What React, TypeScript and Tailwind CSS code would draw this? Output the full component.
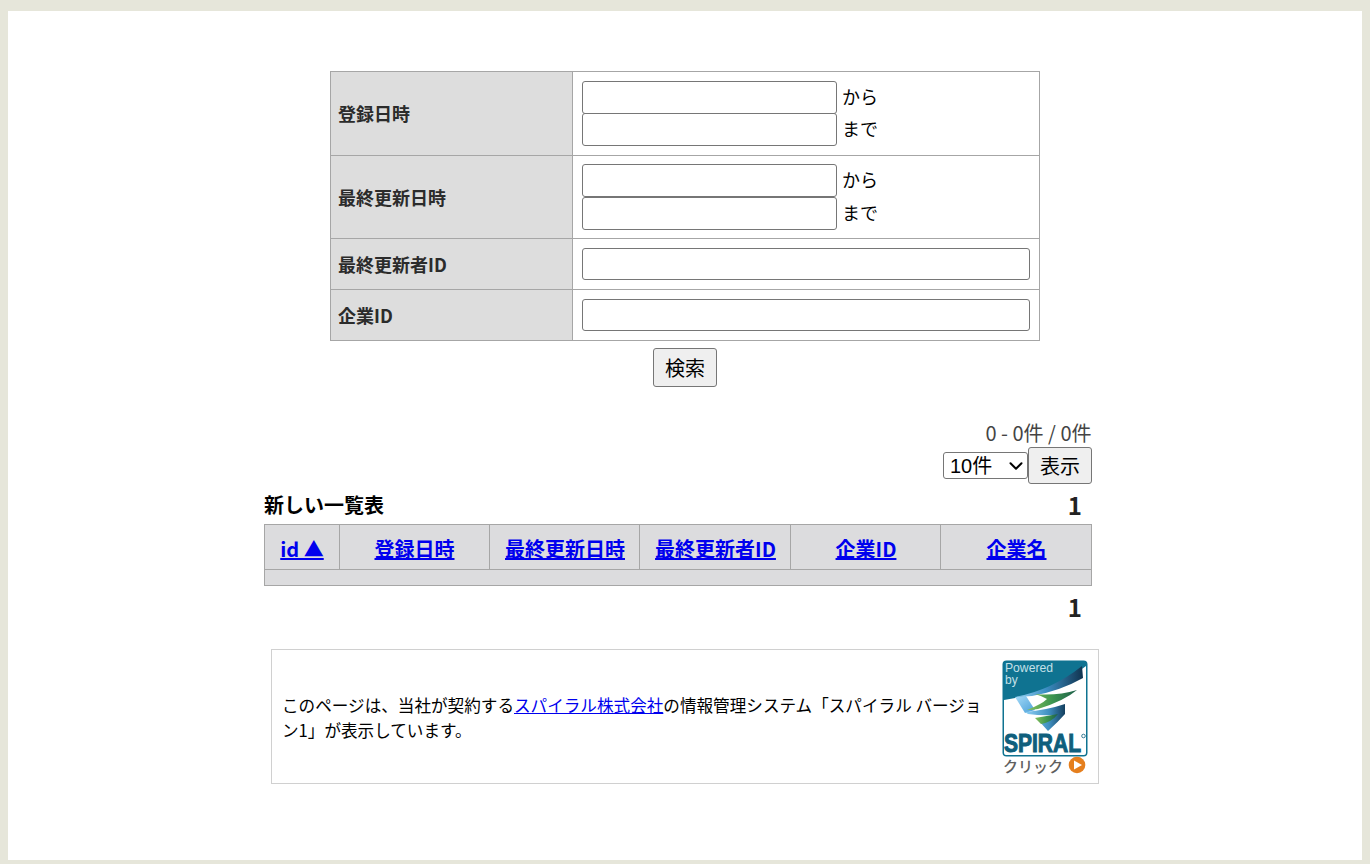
import React from 'react';
import { ChevronDown } from 'lucide-react';

const FONT = "font-['Noto_Sans_CJK_JP','Noto_Sans_CJK_SC',sans-serif]";
const ARIAL = "font-['Liberation_Sans','Noto_Sans_CJK_JP',sans-serif]";

const Logo = () => (
  <svg width="86" height="116" viewBox="0 0 86 116" className="block mt-[2px]">
    <defs>
      <linearGradient id="top" x1="0" y1="0" x2="1" y2="0">
        <stop offset="0" stopColor="#9ad6f6" />
        <stop offset="0.45" stopColor="#3c8fc4" />
        <stop offset="1" stopColor="#10334f" />
      </linearGradient>
      <linearGradient id="drop" x1="0" y1="0" x2="1" y2="1">
        <stop offset="0" stopColor="#a5dbf8" />
        <stop offset="1" stopColor="#4a9fd8" />
      </linearGradient>
      <linearGradient id="mid" x1="0" y1="0" x2="1" y2="0">
        <stop offset="0" stopColor="#8fd0f4" />
        <stop offset="0.6" stopColor="#3f8fc0" />
        <stop offset="1" stopColor="#143f5e" />
      </linearGradient>
      <linearGradient id="green" x1="0" y1="0" x2="1" y2="0">
        <stop offset="0" stopColor="#86c05a" />
        <stop offset="0.5" stopColor="#3d9650" />
        <stop offset="1" stopColor="#1d5f4a" />
      </linearGradient>
    </defs>
    <rect x="0.5" y="0.5" width="85" height="96" rx="4" fill="#0f7391" />
    <path d="M2 40 Q48 34 84 6 V93 a2 2 0 0 1 -2 2 H4 a2 2 0 0 1 -2 -2 Z" fill="#fff" />
    <text x="3" y="12" fontSize="12" fill="#c4e0e8" fontFamily="Liberation Sans" textLength="48" lengthAdjust="spacingAndGlyphs">Powered</text>
    <text x="3" y="24" fontSize="12" fill="#c4e0e8" fontFamily="Liberation Sans">by</text>
    <path d="M13 37 L24 36 L33 50 L23 53 Z" fill="url(#drop)" />
    <path d="M13 37 Q50 30 80 6 L81 18 Q58 31 30 36 Z" fill="url(#top)" />
    <path d="M33 34 Q55 36 75 30 Q62 41 36 49 Q30 50 25 50 Q40 44 45 39 Q40 36 33 34 Z" fill="url(#green)" />
    <path d="M23 52 Q45 50 63 44 L63 54 Q56 62 46 71 L37 61 L46 60 Q52 58 54 55 Q40 56 26 54 Z" fill="url(#mid)" />
    <path d="M33 58 L56 54 Q50 62 39 64 Z" fill="url(#green)" />
    <text transform="scale(1 1.2)" x="2" y="76.5" fontSize="21.5" fontWeight="bold" fill="#0f5f7d" stroke="#0f5f7d" strokeWidth="0.9" fontFamily="Liberation Sans" textLength="77" lengthAdjust="spacingAndGlyphs">SPIRAL</text>
    <circle cx="81.5" cy="76" r="1.8" fill="none" stroke="#0f5f7d" strokeWidth="0.8" />
    <text x="1" y="112" fontSize="15" fontWeight="500" fill="#5f5f5f" fontFamily="Noto Sans CJK JP" textLength="60" lengthAdjust="spacingAndGlyphs">クリック</text>
    <circle cx="75" cy="105" r="8.3" fill="#e57f1e" />
    <path d="M72 100.5 L80 105 L72 109.5 Z" fill="#fff" />
  </svg>
);

const DateRange = () => (
  <div>
    <div className="flex items-center h-[32px]">
      <input className="w-[255px] h-[33px] bg-white border border-[#767676] rounded-[3px]" />
      <span className="ml-[5px] -mt-[2px] text-[18px]">から</span>
    </div>
    <div className="flex items-center h-[33px]">
      <input className="w-[255px] h-[33px] bg-white border border-[#767676] rounded-[3px]" />
      <span className="ml-[5px] -mt-[2px] text-[18px]">まで</span>
    </div>
  </div>
);

const labelCell = 'border border-[#a6a6a6] bg-[#dddddd] pl-[7px] pr-2 text-left font-bold text-[18px] text-[#2b2b2b]';
const valueCell = 'border border-[#a6a6a6] px-[9px]';
const wideInput = 'block w-full h-[32px] bg-white border border-[#767676] rounded-[3px]';

const columns = [
  { label: 'id ▲', cls: 'w-[75px]' },
  { label: '登録日時', cls: 'w-[150px]' },
  { label: '最終更新日時', cls: 'w-[150px] pl-[1px]' },
  { label: '最終更新者ID', cls: 'w-[151px] pl-[1px]' },
  { label: '企業ID', cls: 'w-[150px] pl-[1px]' },
  { label: '企業名', cls: 'pl-[1px]' },
];

export default function App() {
  return (
    <div className={`${FONT} h-[864px] bg-[#e6e6da] pt-[11px] pr-2 pb-1 pl-2`}>
      <div className="h-full bg-white flex flex-col items-center pt-[60px] text-black">
        <table className="w-[710px] border-collapse table-fixed">
          <tbody>
            <tr className="h-[84px]">
              <th className={`${labelCell} w-[242px]`}>登録日時</th>
              <td className={valueCell}><DateRange /></td>
            </tr>
            <tr className="h-[83px]">
              <th className={labelCell}>最終更新日時</th>
              <td className={valueCell}><DateRange /></td>
            </tr>
            <tr className="h-[51px]">
              <th className={labelCell}>最終更新者ID</th>
              <td className={valueCell}><input className={wideInput} /></td>
            </tr>
            <tr className="h-[51px]">
              <th className={labelCell}>企業ID</th>
              <td className={valueCell}><input className={wideInput} /></td>
            </tr>
          </tbody>
        </table>

        <button className="mt-[7px] w-[64px] h-[39px] bg-[#efefef] border border-[#767676] rounded-[3px] text-[20px] leading-none">検索</button>

        <div className="w-[828px] mr-[14px] mt-[32px]">
          <div className="text-right text-[20px] leading-[28px] pr-[0.5px] text-[#444444]">0 - 0件 / 0件</div>
          <div className="flex justify-end items-center">
            <div className="relative w-[85px] h-[27px]">
              <select defaultValue="10" className={`${ARIAL} appearance-none w-full h-full pl-[6px] bg-white border border-[#767676] rounded-[3px] text-[20px] leading-none`}>
                <option value="10">10件</option>
              </select>
              <ChevronDown size={22} strokeWidth={2.2} className="absolute right-[1px] top-[3px] text-black pointer-events-none" />
            </div>
            <button className="w-[64px] h-[37px] bg-[#efefef] border border-[#767676] rounded-[3px] text-[20px] leading-none">表示</button>
          </div>
          <div className="flex justify-between items-center h-[40px] pr-[10px]">
            <span className="font-bold text-[20px] pt-[2px]">新しい一覧表</span>
            <span className="font-bold text-[24px] text-[#222222] pt-[2px]">1</span>
          </div>
          <table className="w-full border-collapse table-fixed bg-[#dcdcde]">
            <thead>
              <tr className="h-[45px]">
                {columns.map(col => (
                  <th key={col.label} className={`border border-[#a6a6a6] font-bold text-[20px] pt-[3px] ${col.cls}`}>
                    <a href="#" className="text-[#0000ee] underline">{col.label}</a>
                  </th>
                ))}
              </tr>
            </thead>
            <tbody>
              <tr className="h-[16px]">
                <td colSpan={6} className="border border-[#a6a6a6]"></td>
              </tr>
            </tbody>
          </table>
          <div className="flex justify-end items-center h-[42px] pr-[10px]">
            <span className="font-bold text-[24px] text-[#222222]">1</span>
          </div>
        </div>

        <div className="w-[828px] h-[135px] mt-[21px] border border-[#d0d0d0] flex items-center justify-between pl-[11px] pr-[10px]">
          <p className="w-[700px] text-[16.6px] leading-[25px] -ml-px pt-[3px]">
            このページは、当社が契約する<a href="#" className="text-[#0000ee] underline">スパイラル株式会社</a>の情報管理システム「スパイラル バージョン1」が表示しています。
          </p>
          <Logo />
        </div>
      </div>
    </div>
  );
}
